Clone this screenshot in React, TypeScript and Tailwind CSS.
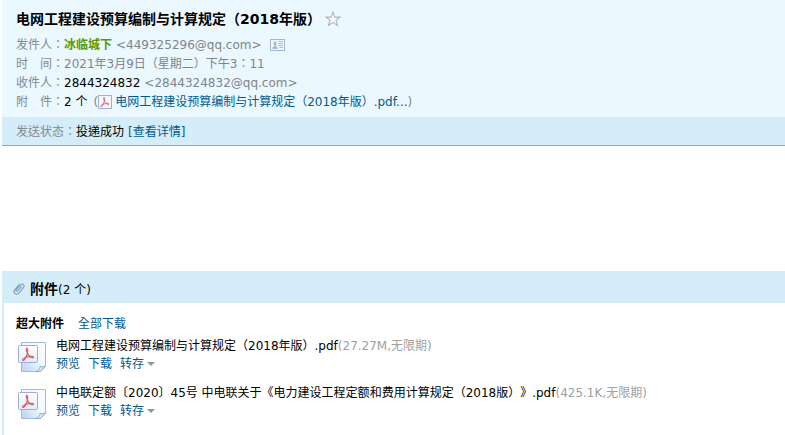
import type { ReactNode } from 'react';

const files = [
  { name: '电网工程建设预算编制与计算规定（2018年版）.pdf', info: '(27.27M,无限期)' },
  { name: '中电联定额〔2020〕45号 中电联关于《电力建设工程定额和费用计算规定（2018版）》.pdf', info: '(425.1K,无限期)' },
];

function StarIcon() {
  return (
    <svg width="16" height="16" viewBox="0 0 16 16" fill="#fafdff" stroke="#b2b5b8" strokeWidth="1.1">
      <path d="M8 1.2 9.8 6.1H15L10.9 9.2 12.5 14.4 8 11.3 3.5 14.4 5.1 9.2 1 6.1H6.2Z" />
    </svg>
  );
}

function CardIcon() {
  return (
    <svg width="15" height="12" viewBox="0 0 15 12" fill="none">
      <rect x="0.5" y="0.5" width="14" height="11" fill="#f2f9ff" stroke="#9db9d9" />
      <path d="M3.6 2.5h2.8v3L5.8 6.6v.8l1.7.7V10h-5V8.1l1.7-.7v-.8L3.6 5.5Z" fill="#a3bddd" />
      <path d="M8.5 2.5H13M8.5 4.5H13M8.5 6.5H13M9.5 8.5H13" stroke="#a3bddd" />
    </svg>
  );
}

function AcrobatMark() {
  return (
    <path
      d="M5.2 1.2c-1.2.2-.3 2.600.6 4.300.9 1.900 2.600 3.900 4.300 4.100 1.500.1 1.300-1.400-.4-1.500C7.200 8 3.700 9 1.700 10.700c-1.100 1 .2 1.800 1.200.7C4.500 9.400 5.900 5.400 6 2.900c0-1-.2-1.700-.8-1.700Z"
      fill="none"
      stroke="#d25555"
      strokeWidth="0.9"
    />
  );
}

function SmallPdfIcon() {
  return (
    <svg width="14" height="14" viewBox="0 0 14 14">
      <rect x="0.5" y="0.5" width="13" height="13" fill="#f6f7fd" stroke="#a3b0d6" />
      <g transform="translate(1.4 1.2) scale(.88)">
        <AcrobatMark />
      </g>
    </svg>
  );
}

function PdfIcon() {
  return (
    <svg width="30" height="32" viewBox="0 0 30 32">
      <defs>
        <linearGradient id="page" x1="1" y1="0" x2="0" y2="1">
          <stop offset="0" stopColor="#fff" />
          <stop offset="0.5" stopColor="#eff6ff" />
          <stop offset="1" stopColor="#b5d1f2" />
        </linearGradient>
        <linearGradient id="plate" x1="0" y1="0" x2="0" y2="1">
          <stop offset="0" stopColor="#fff" />
          <stop offset="1" stopColor="#e4eaf7" />
        </linearGradient>
      </defs>
      <path d="M5.5 1.5H29.5V25L24.5 30.5H5.5Z" fill="url(#page)" stroke="#a3b9de" />
      <path d="M29.5 25 24.5 30.500H19.500C22.500 29.800 24 28 24 25.500Q26.500 26.500 29.500 25Z" fill="#d9e9fb" stroke="#8fabd6" />
      <rect x="2.5" y="4.5" width="19" height="17" rx="1" fill="url(#plate)" stroke="#97aed8" />
      <g transform="translate(5 6) scale(1.13)">
        <AcrobatMark />
      </g>
    </svg>
  );
}

function ClipIcon() {
  return (
    <svg width="14" height="14" viewBox="0 0 14 14" fill="none" stroke="#7ba0c6" strokeWidth="1.1" strokeLinecap="round">
      <path d="M9.4 4.6 5.600 8.800c-1 1-2.200-.2-1.300-1.200L8.700 2.800c1.900-1.900 4.700.4 2.900 2.600L7 10.900c-2.800 2.900-6.500-.3-4.100-3.300L7.200 2.700" />
    </svg>
  );
}

function Field({ label, children }: { label: ReactNode; children: ReactNode }) {
  return (
    <div className="flex h-[19px] items-center whitespace-pre">
      <dt className="w-12 shrink-0 text-[#808a91]">{label}</dt>
      <dd className="flex items-center">{children}</dd>
    </div>
  );
}

export default function App() {
  return (
    <main className="pl-0.5 font-['DejaVu_Sans','Noto_Sans_CJK_TC',sans-serif] text-[12px] leading-4 text-black [text-spacing-trim:space-all]">
      <header className="bg-[#ebf8ff] px-3.5 pt-1 pb-1.5">
        <div className="flex h-[30px] items-center gap-1">
          <h1 className="text-[14px] leading-5 font-bold">电网工程建设预算编制与计算规定（2018年版）</h1>
          <button type="button" aria-label="星标"><StarIcon /></button>
        </div>
        <dl className="pt-px">
          <Field label="发件人：">
            <b className="text-[#5a9a00]">冰临城下</b>
            <span className="pl-1 text-[#7f8589]">&lt;449325296@qq.com&gt;</span>
            <button type="button" aria-label="联系人" className="ml-2"><CardIcon /></button>
          </Field>
          <Field label="时　间：">
            <span className="text-[#7f8589]">2021年3月9日（星期二）下午3：11</span>
          </Field>
          <Field label="收件人：">
            <span>2844324832</span>
            <span className="pl-1 text-[#7f8589]">&lt;2844324832@qq.com&gt;</span>
          </Field>
          <Field label="附　件：">
            <span>2 个</span>
            <span className="pl-1.5 text-[#7f8589]">(</span>
            <a href="#attachments" className="flex items-center gap-[3px] text-[#005a8f]">
              <SmallPdfIcon />
              电网工程建设预算编制与计算规定（2018年版）.pdf...
            </a>
            <span className="text-[#7f8589]">)</span>
          </Field>
        </dl>
      </header>
      <div className="flex h-[29px] items-center border-b border-[#71b2da] bg-[#d5edf9] px-3.5 pt-0.5">
        <span className="text-[#808a91]">发送状态：</span>
        <span>投递成功</span>
        <a href="#status" className="pl-1 text-[#005a8f]">[查看详情]</a>
      </div>

      <section id="attachments" className="mt-[125px] border-l-2 border-[#d5edf9]">
        <div className="flex h-8 items-center gap-1 bg-[#d5edf9] pt-1 pl-2">
          <ClipIcon />
          <h2 className="text-[14px] leading-5 font-bold">附件<span className="text-[12px] font-normal">(2 个)</span></h2>
        </div>
        <div className="px-3 pt-[13px] pb-3">
          <div className="flex gap-3.5">
            <b>超大附件</b>
            <a href="#all" className="text-[#005a8f]">全部下载</a>
          </div>
          <ul className="pt-1.5">
            {files.map((f) => (
              <li key={f.name} className="flex h-[47px] items-start gap-2.5">
                <span className="pt-[3px]"><PdfIcon /></span>
                <div className="whitespace-nowrap">
                  <p className="h-[18px]">{f.name}<span className="text-[#a0a0a0]">{f.info}</span></p>
                  <div className="flex items-center gap-2 text-[#005a8f]">
                    <a href="#preview">预览</a>
                    <a href="#download">下载</a>
                    <button type="button" className="flex items-center gap-[3px]">
                      转存
                      <svg width="8" height="4" viewBox="0 0 8 4"><path d="M0 0H8L4 4Z" fill="#8f979c" /></svg>
                    </button>
                  </div>
                </div>
              </li>
            ))}
          </ul>
        </div>
      </section>
    </main>
  );
}
